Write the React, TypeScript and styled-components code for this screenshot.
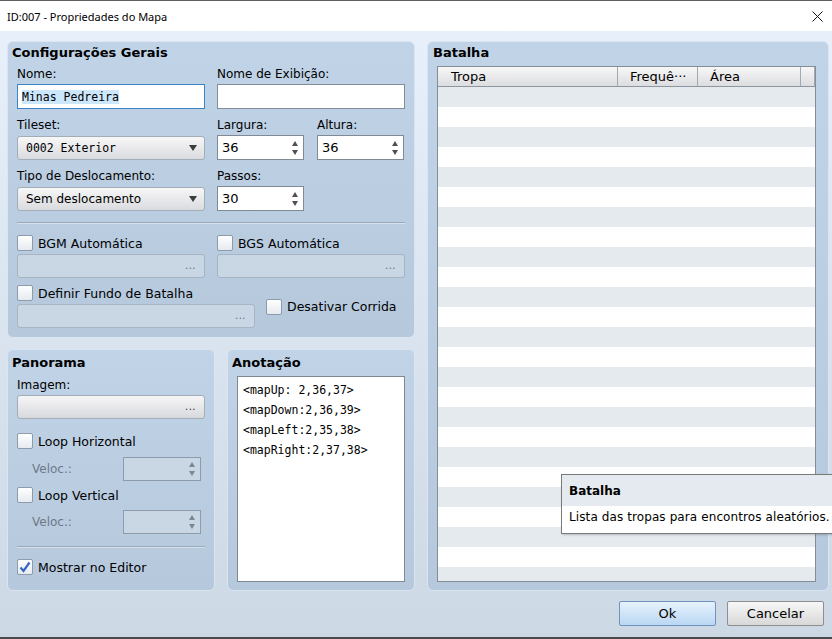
import React from "react";
import styled, { createGlobalStyle } from "styled-components";

const GlobalStyle = createGlobalStyle`
  html, body {
    margin: 0;
    padding: 0;
    background: #cdd9e5;
  }
  body {
    font-family: "DejaVu Sans", "Noto Sans", sans-serif;
    font-size: 12px;
    color: #000;
  }
  * {
    box-sizing: border-box;
  }
`;

const Window = styled.div`
  position: relative;
  width: 832px;
  height: 639px;
  display: flex;
  flex-direction: column;
  overflow: hidden;
  border-top: 1px solid #5f5f5f;
  border-bottom: 2px solid #4a4a4a;
  background: linear-gradient(#e8f1fc, #ccd8e4);
`;

const TitleBar = styled.div`
  flex: none;
  height: 30px;
  display: flex;
  align-items: center;
  justify-content: space-between;
  padding: 0 9px 0 7px;
  background: #fff;
  font-family: "Noto Sans", sans-serif;
  font-size: 11px;
`;

const Body = styled.div`
  flex: 1;
  min-height: 0;
  display: flex;
  flex-direction: column;
  gap: 10px;
  padding: 10px 3px 11px 7px;
`;

const Main = styled.div`
  flex: 1;
  display: flex;
  gap: 12px;
  min-height: 0;
`;

const LeftCol = styled.div`
  width: 408px;
  display: flex;
  flex-direction: column;
  gap: 11px;
`;

const BottomRow = styled.div`
  flex: 1;
  min-height: 0;
  display: flex;
  gap: 12px;
`;

const Group = styled.section<{ $w?: number; $h?: number; $pt?: number; $pr?: number }>`
  ${(p) => (p.$w ? `width: ${p.$w}px; flex: none;` : "")}
  ${(p) => (p.$h ? `height: ${p.$h}px; flex: none;` : "")}
  ${(p) => (!p.$w && !p.$h ? "flex: 1;" : "")}
  min-height: 0;
  display: flex;
  flex-direction: column;
  padding: ${(p) => p.$pt ?? 2}px ${(p) => p.$pr ?? 9}px 8px 9px;
  border: 1px solid #dae5f1;
  border-radius: 6px;
  background: linear-gradient(#c1d3e7, #b5c8dc);
`;

const GroupTitle = styled.div<{ $ml?: number }>`
  flex: none;
  height: 18px;
  line-height: 18px;
  margin-left: ${(p) => p.$ml ?? -5}px;
  font-weight: bold;
  font-size: 13px;
`;

const FormGrid = styled.div`
  display: grid;
  grid-template-columns: 188px 188px;
  column-gap: 12px;
  row-gap: 7px;
  margin-top: 3px;
`;

const Field = styled.div`
  display: flex;
  flex-direction: column;
  gap: 1px;
`;

const Pair = styled.div`
  display: flex;
  gap: 13px;
`;

const Label = styled.div<{ $disabled?: boolean }>`
  height: 18px;
  line-height: 18px;
  white-space: nowrap;
  color: ${(p) => (p.$disabled ? "#6d7987" : "#000")};
`;

const TextBox = styled.div<{ $focused?: boolean }>`
  height: 25px;
  display: flex;
  align-items: center;
  padding: 0 4px;
  background: #fff;
  border: 1px solid ${(p) => (p.$focused ? "#3d84c6" : "#828d99")};
  font-family: "DejaVu Sans Mono", monospace;
  font-size: 11.5px;
`;

const Selected = styled.span`
  background: #cce6fb;
`;

const Select = styled.div<{ $mono?: boolean }>`
  height: 24px;
  margin-top: 1px;
  display: flex;
  align-items: center;
  justify-content: space-between;
  padding: 0 7px 0 8px;
  border: 1px solid #a3adb7;
  border-radius: 3px;
  background: linear-gradient(#f7f7f7, #dadbdf);
  font-family: ${(p) => (p.$mono ? '"DejaVu Sans Mono", monospace' : "inherit")};
  font-size: ${(p) => (p.$mono ? "11.5px" : "12px")};

  &::after {
    content: "";
    border-left: 4px solid transparent;
    border-right: 4px solid transparent;
    border-top: 6px solid #3c3c3c;
  }
`;

const Spin = styled.div<{ $disabled?: boolean; $w?: number; $h?: number }>`
  width: ${(p) => p.$w ?? 87}px;
  height: ${(p) => p.$h ?? 25}px;
  display: flex;
  align-items: center;
  justify-content: space-between;
  padding: 0 5px 0 4px;
  background: ${(p) => (p.$disabled ? "#c9d6e3" : "#fff")};
  border: 1px solid ${(p) => (p.$disabled ? "#8e9baa" : "#7f8a96")};
  font-size: 13px;
`;

const Arrows = styled.span<{ $disabled?: boolean }>`
  display: flex;
  flex-direction: column;
  align-items: center;
  gap: 4px;

  &::before,
  &::after {
    content: "";
    border-left: 3px solid transparent;
    border-right: 3px solid transparent;
  }
  &::before {
    border-bottom: 5px solid ${(p) => (p.$disabled ? "#7b8794" : "#505050")};
  }
  &::after {
    border-top: 5px solid ${(p) => (p.$disabled ? "#7b8794" : "#505050")};
  }
`;

const Browse = styled.div<{ $enabled?: boolean; $w?: number }>`
  width: ${(p) => (p.$w ? `${p.$w}px` : "100%")};
  height: 24px;
  display: flex;
  align-items: center;
  justify-content: flex-end;
  padding: 0 8px 2px 0;
  border: 1px solid ${(p) => (p.$enabled ? "#a3adb7" : "#a6b4c3")};
  border-radius: 3px;
  background: ${(p) => (p.$enabled ? "linear-gradient(#f6f6f6, #d8d9dd)" : "#c9d6e3")};
  color: ${(p) => (p.$enabled ? "#303030" : "#5d6875")};
  font-size: 10px;
  letter-spacing: 0.5px;
`;

const Separator = styled.div<{ $mt: number; $mb: number }>`
  flex: none;
  height: 2px;
  margin: ${(p) => p.$mt}px 0 ${(p) => p.$mb}px;
  border-top: 1px solid #98aabe;
  border-bottom: 1px solid #d6e1ed;
`;

const CheckRow = styled.label<{ $mt?: number }>`
  flex: none;
  display: flex;
  align-items: center;
  gap: 5px;
  height: 16px;
  margin-top: ${(p) => p.$mt ?? 0}px;
  white-space: nowrap;
  font-size: 12.5px;
`;

const Box = styled.span`
  flex: none;
  width: 16px;
  height: 16px;
  display: inline-flex;
  align-items: center;
  justify-content: center;
  border: 1px solid #8d9baa;
  border-radius: 2px;
  background: linear-gradient(#fefefe, #e6ebf0);
`;

const CheckGrid = styled.div`
  display: grid;
  grid-template-columns: 188px 188px;
  column-gap: 12px;
`;

const CheckBlock = styled.div<{ $mt?: number }>`
  display: flex;
  flex-direction: column;
  gap: 3px;
  margin-top: ${(p) => p.$mt ?? 0}px;
`;

const BattleBgRow = styled.div`
  display: flex;
  align-items: center;
  gap: 11px;
  margin-top: 7px;
`;

const Stack = styled.div<{ $mt?: number }>`
  display: flex;
  flex-direction: column;
  gap: 1px;
  margin-top: ${(p) => p.$mt ?? 0}px;
`;

const SpeedRow = styled.div<{ $mt: number }>`
  flex: none;
  display: flex;
  align-items: center;
  justify-content: space-between;
  height: 24px;
  margin-top: ${(p) => p.$mt}px;
  padding: 0 4px 0 15px;
`;

const NoteBox = styled.div`
  flex: 1;
  margin-top: 4px;
  padding: 3px 5px;
  background: #fff;
  border: 1px solid #7d8995;
  font-family: "DejaVu Sans Mono", monospace;
  font-size: 11.5px;
  line-height: 20px;
  white-space: pre;
`;

const Table = styled.div`
  flex: 1;
  min-height: 0;
  margin-top: 4px;
  display: flex;
  flex-direction: column;
  overflow: hidden;
  background: #fff;
  border: 1px solid #838d98;
`;

const TableHead = styled.div`
  flex: none;
  height: 20px;
  display: grid;
  grid-template-columns: 180px 80px 103px 1fr;
  border-bottom: 1px solid #8e969f;
  background: linear-gradient(#f7f7f7, #dcdde0);
`;

const HeadCell = styled.div<{ $pl?: number }>`
  padding-left: ${(p) => p.$pl ?? 12}px;
  line-height: 19px;
  font-size: 13px;
  white-space: nowrap;
  overflow: hidden;
  border-right: 1px solid #a2a9b0;
`;

const Row = styled.div`
  flex: none;
  height: 20px;
  &:nth-child(even) {
    background: #e5eaef;
  }
`;

const Footer = styled.div`
  flex: none;
  height: 25px;
  display: flex;
  justify-content: flex-end;
  gap: 11px;
  padding-right: 5px;
`;

const Button = styled.button<{ $primary?: boolean }>`
  width: 97px;
  height: 25px;
  padding: 0;
  border-radius: 2px;
  border: 1px solid ${(p) => (p.$primary ? "#6f93ba" : "#8e8e8e")};
  background: ${(p) =>
    p.$primary ? "linear-gradient(#e6f2fd, #bad7f3)" : "linear-gradient(#f7f7f7, #d8d8d8)"};
  font-family: inherit;
  font-size: 13px;
  color: #000;
`;

const Tooltip = styled.div`
  position: absolute;
  left: 561px;
  top: 473px;
  width: 280px;
  height: 60px;
  display: flex;
  flex-direction: column;
  border: 1px solid #7a7a7a;
  box-shadow: 1px 1px 2px rgba(0, 0, 0, 0.2);
  background: #fff;
`;

const TipHead = styled.div`
  height: 31px;
  padding: 9px 0 0 7px;
  background: #e5eaf0;
  font-weight: bold;
`;

const TipBody = styled.div`
  flex: 1;
  padding: 4px 0 0 7px;
  white-space: nowrap;
  font-size: 12px;
  letter-spacing: 0.1px;
`;

const Check = () => (
  <svg width="12" height="12" viewBox="0 0 12 12">
    <path d="M1.5 6.5 L4.5 10 L10.5 1.5" fill="none" stroke="#3567c2" strokeWidth="2.2" />
  </svg>
);

const CloseIcon = () => (
  <svg width="11" height="11" viewBox="0 0 11 11">
    <path d="M0.5 0.5 L10.5 10.5 M10.5 0.5 L0.5 10.5" stroke="#111" strokeWidth="1" />
  </svg>
);

const notes = "<mapUp: 2,36,37>\n<mapDown:2,36,39>\n<mapLeft:2,35,38>\n<mapRight:2,37,38>";

const App = () => {
  const rows = Array.from({ length: 26 }, (_, i) => i);
  return (
    <Window>
      <GlobalStyle />
      <TitleBar>
        <span>ID:007 - Propriedades do Mapa</span>
        <CloseIcon />
      </TitleBar>
      <Body>
        <Main>
          <LeftCol>
            <Group $h={297}>
              <GroupTitle>Configurações Gerais</GroupTitle>
              <FormGrid>
                <Field>
                  <Label>Nome:</Label>
                  <TextBox $focused>
                    <Selected>Minas Pedreira</Selected>
                  </TextBox>
                </Field>
                <Field>
                  <Label>Nome de Exibição:</Label>
                  <TextBox />
                </Field>
                <Field>
                  <Label>Tileset:</Label>
                  <Select $mono>0002 Exterior</Select>
                </Field>
                <Pair>
                  <Field>
                    <Label>Largura:</Label>
                    <Spin>
                      36
                      <Arrows />
                    </Spin>
                  </Field>
                  <Field>
                    <Label>Altura:</Label>
                    <Spin>
                      36
                      <Arrows />
                    </Spin>
                  </Field>
                </Pair>
                <Field>
                  <Label>Tipo de Deslocamento:</Label>
                  <Select>Sem deslocamento</Select>
                </Field>
                <Field>
                  <Label>Passos:</Label>
                  <Spin>
                    30
                    <Arrows />
                  </Spin>
                </Field>
              </FormGrid>
              <Separator $mt={11} $mb={11} />
              <CheckGrid>
                <CheckBlock>
                  <CheckRow>
                    <Box />
                    BGM Automática
                  </CheckRow>
                  <Browse>...</Browse>
                </CheckBlock>
                <CheckBlock>
                  <CheckRow>
                    <Box />
                    BGS Automática
                  </CheckRow>
                  <Browse>...</Browse>
                </CheckBlock>
              </CheckGrid>
              <BattleBgRow>
                <CheckBlock>
                  <CheckRow>
                    <Box />
                    Definir Fundo de Batalha
                  </CheckRow>
                  <Browse $w={238}>...</Browse>
                </CheckBlock>
                <CheckRow>
                  <Box />
                  Desativar Corrida
                </CheckRow>
              </BattleBgRow>
            </Group>
            <BottomRow>
              <Group $w={208} $pt={4}>
                <GroupTitle>Panorama</GroupTitle>
                <Stack $mt={4}>
                  <Label>Imagem:</Label>
                  <Browse $enabled>...</Browse>
                </Stack>
                <CheckRow $mt={14}>
                  <Box />
                  Loop Horizontal
                </CheckRow>
                <SpeedRow $mt={8}>
                  <Label $disabled>Veloc.:</Label>
                  <Spin $disabled $w={78} $h={24}>
                    <span />
                    <Arrows $disabled />
                  </Spin>
                </SpeedRow>
                <CheckRow $mt={6}>
                  <Box />
                  Loop Vertical
                </CheckRow>
                <SpeedRow $mt={7}>
                  <Label $disabled>Veloc.:</Label>
                  <Spin $disabled $w={78} $h={24}>
                    <span />
                    <Arrows $disabled />
                  </Spin>
                </SpeedRow>
                <Separator $mt={12} $mb={11} />
                <CheckRow>
                  <Box>
                    <Check />
                  </Box>
                  Mostrar no Editor
                </CheckRow>
              </Group>
              <Group $w={188} $pt={4}>
                <GroupTitle>Anotação</GroupTitle>
                <NoteBox>{notes}</NoteBox>
              </Group>
            </BottomRow>
          </LeftCol>
          <Group $w={402} $pr={12}>
            <GroupTitle $ml={-4}>Batalha</GroupTitle>
            <Table>
              <TableHead>
                <HeadCell $pl={13}>Tropa</HeadCell>
                <HeadCell>Frequê···</HeadCell>
                <HeadCell>Área</HeadCell>
                <HeadCell />
              </TableHead>
              {rows.map((r) => (
                <Row key={r} />
              ))}
            </Table>
          </Group>
        </Main>
        <Footer>
          <Button $primary>Ok</Button>
          <Button>Cancelar</Button>
        </Footer>
      </Body>
      <Tooltip>
        <TipHead>Batalha</TipHead>
        <TipBody>Lista das tropas para encontros aleatórios.</TipBody>
      </Tooltip>
    </Window>
  );
};

export default App;
